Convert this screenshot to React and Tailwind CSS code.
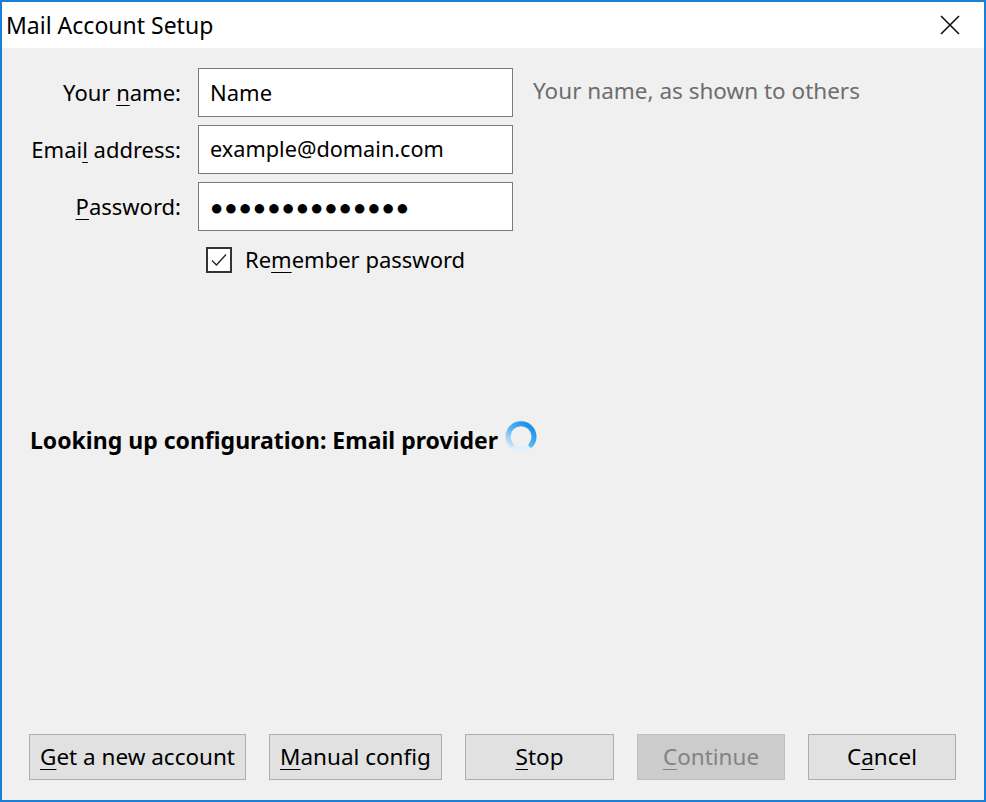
import React from "react";

const font = { fontFamily: '"Noto Sans", "Open Sans", sans-serif' };

const Key = ({ children }) => (
  <span className="underline underline-offset-[4px] decoration-1">{children}</span>
);

const Btn = ({ w, disabled, children }) => (
  <button
    className={
      disabled
        ? "h-[46px] border border-[#bfbfbf] bg-[#cccccc] text-[#838383] text-[22.5px]"
        : "h-[46px] border border-[#adadad] bg-[#e1e1e1] text-black text-[22.5px]"
    }
    style={{ width: w }}
  >
    {children}
  </button>
);

const Spinner = () => (
  <svg width="36" height="36" viewBox="0 0 36 36">
    <defs>
      <linearGradient id="sp" x1="0" y1="1" x2="1" y2="0">
        <stop offset="0" stopColor="#cfe9fb" />
        <stop offset="0.45" stopColor="#56b2f1" />
        <stop offset="1" stopColor="#0a86e6" />
      </linearGradient>
    </defs>
    <circle cx="18" cy="18" r="13" fill="none" stroke="#e0f0fb" strokeWidth="5" />
    <path d="M8 27 A13 13 0 1 1 28 27" fill="none" stroke="url(#sp)" strokeWidth="5" strokeLinecap="round" />
  </svg>
);

export default function App() {
  return (
    <div className="w-[986px] h-[802px] border-2 border-[#1a7fd6] bg-[#f0f0f0] flex flex-col" style={font}>
      {/* title bar */}
      <div className="h-[46px] bg-white flex items-center justify-between pl-[4px] pr-[24px]">
        <span className="text-[23px] text-black">Mail Account Setup</span>
        <svg width="20" height="20" viewBox="0 0 20 20">
          <path d="M1 1 L19 19 M19 1 L1 19" stroke="#111" strokeWidth="1.6" />
        </svg>
      </div>

      <div className="flex-1 flex flex-col">
        <div className="grid grid-cols-[179px_315px_auto] gap-x-[17px] gap-y-[8px] mt-[20px] items-center text-[22px]">
          <span className="text-right">Your <Key>n</Key>ame:</span>
          <div className="h-[49px] bg-white border border-[#7a7a7a] flex items-center pl-[11px]">Name</div>
          <span className="text-[#6d6d6d] ml-[3px] -mt-[3px] text-[22.5px]">Your name, as shown to others</span>

          <span className="text-right">Emai<Key>l</Key> address:</span>
          <div className="h-[49px] bg-white border border-[#7a7a7a] flex items-center pl-[11px] text-[21.7px]">example@domain.com</div>
          <span />

          <span className="text-right"><Key>P</Key>assword:</span>
          <div className="h-[49px] bg-white border border-[#7a7a7a] flex items-center pl-[11px] text-[22px] tracking-[1px]">
            ●●●●●●●●●●●●●●
          </div>
          <span />
        </div>

        <div className="flex items-center mt-[12px] ml-[204px] text-[22px]">
          <span className="w-[26px] h-[26px] border-2 border-[#333] bg-white flex items-center justify-center">
            <svg width="18" height="18" viewBox="0 0 18 18">
              <path d="M2 9.5 L6.5 14 L16 3.5" fill="none" stroke="#222" strokeWidth="1.3" />
            </svg>
          </span>
          <span className="ml-[13px]">Re<Key>m</Key>ember password</span>
        </div>

        <div className="flex items-center mt-[147px] ml-[28px]">
          <span className="text-[23px] font-bold">Looking up configuration: Email provider</span>
          <span className="ml-[5px] -mt-[8px]"><Spinner /></span>
        </div>

        <div className="mt-auto flex gap-[23px] pl-[27px] pb-[20px]">
          <Btn w={217}><Key>G</Key>et a new account</Btn>
          <Btn w={173}><Key>M</Key>anual config</Btn>
          <Btn w={149}><Key>S</Key>top</Btn>
          <Btn w={148} disabled><Key>C</Key>ontinue</Btn>
          <Btn w={148}>C<Key>a</Key>ncel</Btn>
        </div>
      </div>
    </div>
  );
}
